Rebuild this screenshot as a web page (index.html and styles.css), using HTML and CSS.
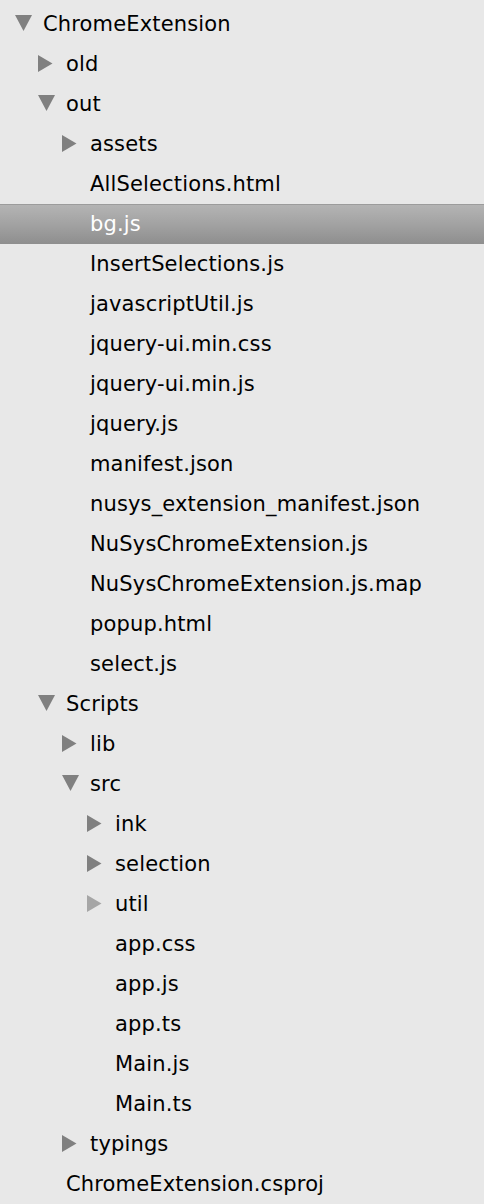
FILE: index.html
```html
<!DOCTYPE html>
<html>
<head>
<meta charset="utf-8">
<link rel="stylesheet" href="styles.css">
</head>
<body>
<div class="tree">
  <div class="row l0"><span class="tog"><svg width="18" height="18" viewBox="0 0 18 18"><polygon class="tri" points="0,0 17,0 8.5,16"/></svg></span><span class="name">ChromeExtension</span></div>
  <div class="row l1"><span class="tog"><svg width="18" height="18" viewBox="0 0 18 18"><polygon class="tri" points="0,0 14.5,8.5 0,17"/></svg></span><span class="name">old</span></div>
  <div class="row l1"><span class="tog"><svg width="18" height="18" viewBox="0 0 18 18"><polygon class="tri" points="0,0 17,0 8.5,16"/></svg></span><span class="name">out</span></div>
  <div class="row l2"><span class="tog"><svg width="18" height="18" viewBox="0 0 18 18"><polygon class="tri" points="0,0 14.5,8.5 0,17"/></svg></span><span class="name">assets</span></div>
  <div class="row l2"><span class="tog"></span><span class="name">AllSelections.html</span></div>
  <div class="row l2 selected"><span class="tog"></span><span class="name">bg.js</span></div>
  <div class="row l2"><span class="tog"></span><span class="name">InsertSelections.js</span></div>
  <div class="row l2"><span class="tog"></span><span class="name">javascriptUtil.js</span></div>
  <div class="row l2"><span class="tog"></span><span class="name">jquery-ui.min.css</span></div>
  <div class="row l2"><span class="tog"></span><span class="name">jquery-ui.min.js</span></div>
  <div class="row l2"><span class="tog"></span><span class="name">jquery.js</span></div>
  <div class="row l2"><span class="tog"></span><span class="name">manifest.json</span></div>
  <div class="row l2"><span class="tog"></span><span class="name">nusys_extension_manifest.json</span></div>
  <div class="row l2"><span class="tog"></span><span class="name">NuSysChromeExtension.js</span></div>
  <div class="row l2"><span class="tog"></span><span class="name">NuSysChromeExtension.js.map</span></div>
  <div class="row l2"><span class="tog"></span><span class="name">popup.html</span></div>
  <div class="row l2"><span class="tog"></span><span class="name">select.js</span></div>
  <div class="row l1"><span class="tog"><svg width="18" height="18" viewBox="0 0 18 18"><polygon class="tri" points="0,0 17,0 8.5,16"/></svg></span><span class="name">Scripts</span></div>
  <div class="row l2"><span class="tog"><svg width="18" height="18" viewBox="0 0 18 18"><polygon class="tri" points="0,0 14.5,8.5 0,17"/></svg></span><span class="name">lib</span></div>
  <div class="row l2"><span class="tog"><svg width="18" height="18" viewBox="0 0 18 18"><polygon class="tri" points="0,0 17,0 8.5,16"/></svg></span><span class="name">src</span></div>
  <div class="row l3"><span class="tog"><svg width="18" height="18" viewBox="0 0 18 18"><polygon class="tri" points="0,0 14.5,8.5 0,17"/></svg></span><span class="name">ink</span></div>
  <div class="row l3"><span class="tog"><svg width="18" height="18" viewBox="0 0 18 18"><polygon class="tri" points="0,0 14.5,8.5 0,17"/></svg></span><span class="name">selection</span></div>
  <div class="row l3"><span class="tog"><svg width="18" height="18" viewBox="0 0 18 18"><polygon class="tri light" points="0,0 14.5,8.5 0,17"/></svg></span><span class="name">util</span></div>
  <div class="row l3"><span class="tog"></span><span class="name">app.css</span></div>
  <div class="row l3"><span class="tog"></span><span class="name">app.js</span></div>
  <div class="row l3"><span class="tog"></span><span class="name">app.ts</span></div>
  <div class="row l3"><span class="tog"></span><span class="name">Main.js</span></div>
  <div class="row l3"><span class="tog"></span><span class="name">Main.ts</span></div>
  <div class="row l2"><span class="tog"><svg width="18" height="18" viewBox="0 0 18 18"><polygon class="tri" points="0,0 14.5,8.5 0,17"/></svg></span><span class="name">typings</span></div>
  <div class="row l1"><span class="tog"></span><span class="name">ChromeExtension.csproj</span></div>
</div>
</body>
</html>
```
FILE: styles.css
```css
html, body {
  margin: 0;
  padding: 0;
  background: #e8e8e8;
}
body {
  font-family: "DejaVu Sans", "Liberation Sans", sans-serif;
  font-size: 21px;
  letter-spacing: 0.15px;
  color: #000;
  width: 484px;
  height: 1204px;
  overflow: hidden;
}
.tree {
  padding-top: 4px;
  display: flex;
  flex-direction: column;
}
.row {
  height: 40px;
  display: flex;
  align-items: center;
  box-sizing: border-box;
  white-space: nowrap;
}
.l0 { padding-left: 15px; }
.l1 { padding-left: 38px; }
.l2 { padding-left: 62px; }
.l3 { padding-left: 87px; }
.tog {
  width: 28px;
  flex: none;
  display: flex;
  align-items: center;
}
.tog svg { display: block; margin-top: -1px; }
.tri { fill: #808080; }
.tri.light { fill: #a6a6a6; }
.name { line-height: 40px; margin-top: -1px; }
.selected {
  background: linear-gradient(to bottom, #b4b4b4 0%, #a2a2a2 50%, #8e8e8e 100%);
  border-top: 1px solid #9c9c9c;
  color: #fff;
}
.selected .name { margin-top: -2px; }
```
